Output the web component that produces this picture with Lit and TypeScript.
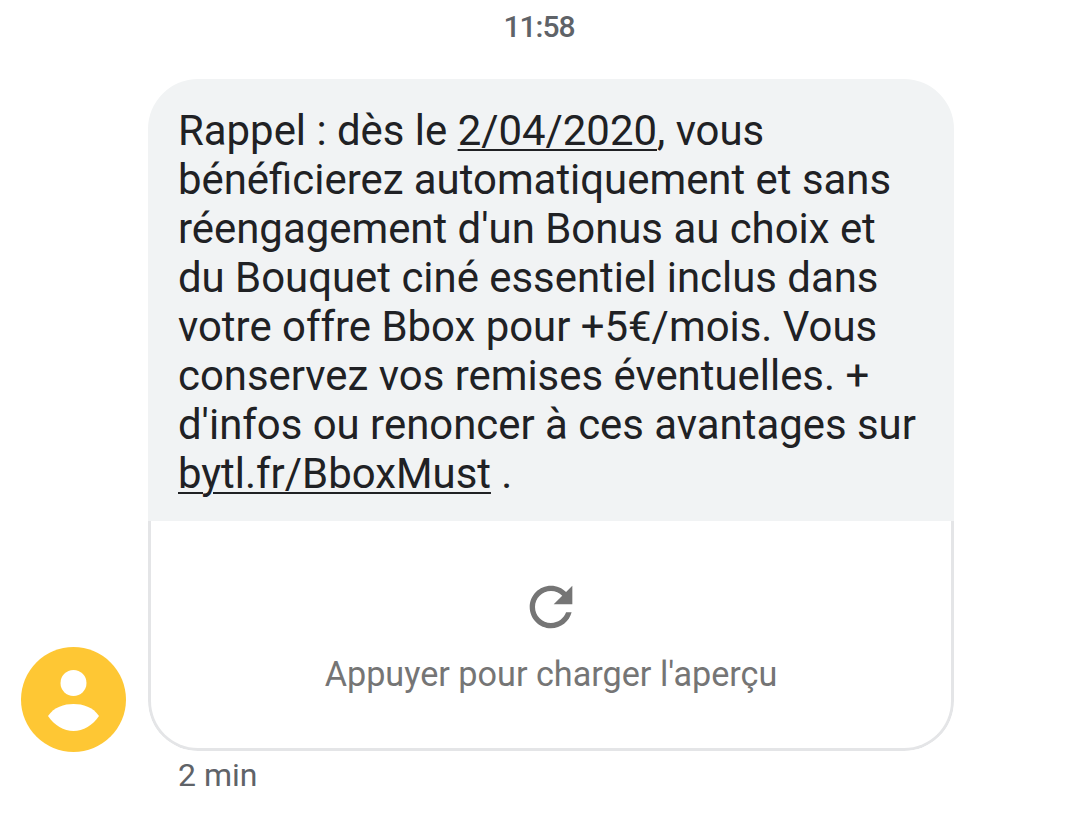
import { LitElement, html, css } from 'lit';
import { customElement } from 'lit/decorators.js';

@customElement('app-root')
export class AppRoot extends LitElement {
  static styles = css`
    :host {
      display: block;
      width: 1080px;
      height: 840px;
      background: #ffffff;
      font-family: Roboto, 'Liberation Sans', sans-serif;
      overflow: hidden;
    }

    .time {
      padding: 10px 2px 0 0;
      height: 79px;
      box-sizing: border-box;
      text-align: center;
      font-size: 30px;
      line-height: 34px;
      letter-spacing: -1px;
      font-weight: 500;
      color: #5f6368;
    }

    .row {
      display: flex;
      align-items: flex-end;
      padding-left: 21px;
      gap: 22px;
    }

    .avatar {
      width: 105px;
      height: 105px;
      flex: none;
      display: block;
      margin-bottom: -1px;
    }

    .bubble {
      width: 806px;
      height: 672px;
      display: flex;
      flex-direction: column;
      border-radius: 50px;
      overflow: hidden;
    }

    .message {
      height: 442px;
      box-sizing: border-box;
      padding: 27px 0 0 30px;
      background: #f1f3f4;
      color: #202124;
      font-size: 41.9px;
      line-height: 49px;
      white-space: nowrap;
    }

    .message a {
      color: inherit;
      text-decoration: underline;
      text-decoration-thickness: 2px;
      text-underline-offset: 4px;
    }

    .preview {
      flex: 1;
      display: flex;
      flex-direction: column;
      align-items: center;
      box-sizing: border-box;
      padding-top: 54px;
      border: 3px solid #e4e5e7;
      border-top: none;
      border-radius: 0 0 50px 50px;
    }

    .preview svg {
      width: 64px;
      height: 64px;
      display: block;
      fill: #757575;
    }

    .preview span {
      margin-top: 16px;
      font-size: 34.2px;
      line-height: 38px;
      color: #757575;
    }

    .age {
      padding: 7px 0 0 178px;
      font-size: 32px;
      line-height: 34px;
      color: #5f6368;
    }
  `;

  render() {
    return html`
      <div class="time">11:58</div>
      <div class="row">
        <svg class="avatar" viewBox="0 0 105 105">
          <circle cx="52.5" cy="52.5" r="52.5" fill="#fec734"></circle>
          <circle cx="52.5" cy="36" r="13" fill="#ffffff"></circle>
          <path d="M27 69 C33 60 43 57 52.5 57 C62 57 72 60 78 69 C72 78 62 84 52.5 84 C43 84 33 78 27 69 Z" fill="#ffffff"></path>
        </svg>
        <div class="bubble">
          <div class="message">Rappel : dès le <a>2/04/2020</a>, vous<br />bénéficierez automatiquement et sans<br />réengagement d'un Bonus au choix et<br />du Bouquet ciné essentiel inclus dans<br />votre offre Bbox pour +5€/mois. Vous<br />conservez vos remises éventuelles. +<br />d'infos ou renoncer à ces avantages sur<br /><a>bytl.fr/BboxMust</a> .</div>
          <div class="preview">
            <svg viewBox="0 0 24 24">
              <path d="M17.65 6.35C16.2 4.9 14.21 4 12 4c-4.42 0-7.99 3.58-7.99 8s3.57 8 7.99 8c3.73 0 6.84-2.55 7.73-6h-2.08c-.82 2.33-3.04 4-5.65 4-3.31 0-6-2.69-6-6s2.69-6 6-6c1.66 0 3.14.69 4.22 1.78L13 11h7V4l-2.35 2.35z"></path>
            </svg>
            <span>Appuyer pour charger l'aperçu</span>
          </div>
        </div>
      </div>
      <div class="age">2 min</div>
    `;
  }
}
